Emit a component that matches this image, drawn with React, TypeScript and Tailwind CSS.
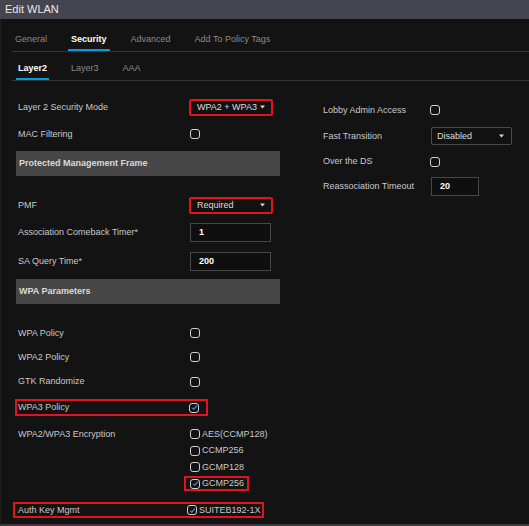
import React from "react";

// Petit triangle des listes déroulantes
function Caret() {
  return (
    <svg width="5" height="4" viewBox="0 0 5 4" className="shrink-0">
      <path d="M0 0.5 L5 0.5 L2.5 3.5 Z" fill="#d8d8d8" />
    </svg>
  );
}

function Check({ checked = false }: { checked?: boolean }) {
  return (
    <span className="flex h-[10px] w-[10px] shrink-0 items-center justify-center rounded-[3px] border-[1.5px] border-[#cfcfcf]">
      {checked && (
        <svg width="7" height="7" viewBox="0 0 7 7">
          <path d="M1.2 3.8 L2.8 5.3 L5.8 1.6" stroke="#3ea0e0" strokeWidth="1.1" fill="none" />
        </svg>
      )}
    </span>
  );
}

function Select({ value, red = false, w }: { value: string; red?: boolean; w: string }) {
  return (
    <div
      className={`flex items-center justify-between rounded-[2px] ${w} ${
        red ? "h-[17px] border-2 border-[#e3121c] pl-[6px] pr-[6px]" : "h-[18px] border border-[#4a4a4a] pl-[5px] pr-[7px]"
      } bg-[#121212] text-[9px] leading-[11px] text-[#dcdcdc]`}
    >
      <span>{value}</span>
      <Caret />
    </div>
  );
}

function Input({ value, w }: { value: string; w: string }) {
  return (
    <div className={`flex h-[19px] ${w} items-center border border-[#474747] bg-[#0f0f0f] pl-[8px] text-[9px] font-bold leading-[11px] text-white`}>
      {value}
    </div>
  );
}

function Row({ label, h, children, className = "" }: { label: string; h: string; children?: React.ReactNode; className?: string }) {
  return (
    <div className={`flex items-center ${h} ${className}`}>
      <span className="w-[174px] shrink-0 pl-[2px] text-[9px] leading-[11px] text-[#c9c9c9]">{label}</span>
      {children}
    </div>
  );
}

function RightRow({ label, h, children, className = "" }: { label: string; h: string; children?: React.ReactNode; className?: string }) {
  return (
    <div className={`flex items-center ${h} ${className}`}>
      <span className="w-[107px] shrink-0 text-[9px] leading-[11px] text-[#c9c9c9]">{label}</span>
      {children}
    </div>
  );
}

function Section({ title, className = "" }: { title: string; className?: string }) {
  return (
    <div className={`flex h-[25px] items-center bg-[#474747] pl-[3px] text-[9px] font-bold leading-[11px] text-[#dadada] ${className}`}>
      {title}
    </div>
  );
}

function Option({ label, checked = false }: { label: string; checked?: boolean }) {
  return (
    <div className="flex h-[16.5px] items-center gap-[2px]">
      <Check checked={checked} />
      <span className="text-[9px] leading-[11px] text-[#c9c9c9]">{label}</span>
    </div>
  );
}

export default function App() {
  const tabs = ["General", "Security", "Advanced", "Add To Policy Tags"];
  const subTabs = ["Layer2", "Layer3", "AAA"];

  return (
    <div className="flex h-[526px] w-[529px] flex-col overflow-hidden bg-[#131313] font-['Liberation_Sans',Arial,sans-serif]">
      {/* En-tête */}
      <div className="flex h-[19px] shrink-0 items-center bg-[#45454f] pl-[5px] text-[11px] text-[#e8e8e8]">
        Edit WLAN
      </div>

      <div className="flex flex-1 flex-col border-b-2 border-l border-[#3a3a3a] border-l-[#1e1e1e]">
        {/* Onglets principaux */}
        <div className="ml-[11px] flex gap-[18px] border-b border-[#353535]">
          {tabs.map((t) => (
            <div
              key={t}
              className={`h-[32px] border-b-2 px-[3px] pt-[15px] text-[9px] leading-[11px] ${
                t === "Security" ? "border-[#0a9ad6] font-bold text-white" : "border-transparent text-[#8a8a8a]"
              }`}
            >
              {t}
            </div>
          ))}
        </div>

        {/* Sous-onglets */}
        <div className="ml-[11px] flex gap-[20px] border-b border-[#353535] pl-[4px]">
          {subTabs.map((t) => (
            <div
              key={t}
              className={`h-[28px] border-b-2 px-[2px] pt-[11px] text-[9px] leading-[11px] ${
                t === "Layer2" ? "border-[#0a9ad6] font-bold text-white" : "border-transparent text-[#8a8a8a]"
              }`}
            >
              {t}
            </div>
          ))}
        </div>

        <div className="flex">
          {/* Colonne gauche */}
          <div className="ml-[15px] flex w-[264px] flex-col">
            <Row label="Layer 2 Security Mode" h="h-[26px]" className="mt-[13px]">
              <div className="-ml-[1px]">
                <Select value="WPA2 + WPA3" red w="w-[84px]" />
              </div>
            </Row>
            <Row label="MAC Filtering" h="h-[28px]">
              <Check />
            </Row>
            <Section title="Protected Management Frame" className="mt-[3px]" />
            <Row label="PMF" h="h-[26px]" className="mt-[16px]">
              <div className="-ml-[1px]">
                <Select value="Required" red w="w-[84px]" />
              </div>
            </Row>
            <Row label="Association Comeback Timer*" h="h-[29px]">
              <Input value="1" w="w-[81px]" />
            </Row>
            <Row label="SA Query Time*" h="h-[29px]">
              <Input value="200" w="w-[81px]" />
            </Row>
            <Section title="WPA Parameters" className="mt-[3px]" />

            <Row label="WPA Policy" h="h-[24px]" className="mt-[17px]">
              <Check />
            </Row>
            <Row label="WPA2 Policy" h="h-[24px]">
              <Check />
            </Row>
            <Row label="GTK Randomize" h="h-[25px]">
              <Check />
            </Row>
            <div className="-ml-[1px] mt-[5px] flex h-[17px] w-[193px] items-center border-2 border-[#e3121c]">
              <span className="w-[172px] shrink-0 pl-[1px] text-[9px] leading-[11px] text-[#c9c9c9]">WPA3 Policy</span>
              <Check checked />
            </div>

            <div className="mt-[10px] flex">
              <span className="flex h-[16.5px] w-[174px] shrink-0 items-center pl-[2px] text-[9px] leading-[11px] text-[#c9c9c9]">
                WPA2/WPA3 Encryption
              </span>
              <div className="flex flex-col">
                <Option label="AES(CCMP128)" />
                <Option label="CCMP256" />
                <Option label="GCMP128" />
                <div className="flex h-[16.5px] items-center">
                  <div className="-ml-[6px] flex h-[15px] w-[65px] items-center gap-[2px] border-2 border-[#e3121c] pl-[4px]">
                    <Check checked />
                    <span className="text-[9px] leading-[11px] text-[#c9c9c9]">GCMP256</span>
                  </div>
                </div>
              </div>
            </div>

            <div className="-ml-[3px] mt-[10px] flex h-[16px] w-[251px] items-center border-2 border-[#e3121c]">
              <span className="w-[172px] shrink-0 pl-[3px] text-[9px] leading-[11px] text-[#c9c9c9]">Auth Key Mgmt</span>
              <Check checked />
              <span className="ml-[2px] text-[9px] leading-[11px] text-[#c9c9c9]">SUITEB192-1X</span>
            </div>
          </div>

          {/* Colonne droite */}
          <div className="ml-[43px] flex flex-col">
            <RightRow label="Lobby Admin Access" h="h-[26px]" className="mt-[16px]">
              <Check />
            </RightRow>
            <RightRow label="Fast Transition" h="h-[26px]">
              <div className="ml-[1px]">
                <Select value="Disabled" w="w-[81px]" />
              </div>
            </RightRow>
            <RightRow label="Over the DS" h="h-[25px]">
              <Check />
            </RightRow>
            <RightRow label="Reassociation Timeout" h="h-[25px]">
              <div className="ml-[1px]">
                <Input value="20" w="w-[48px]" />
              </div>
            </RightRow>
          </div>
        </div>
      </div>
    </div>
  );
}
